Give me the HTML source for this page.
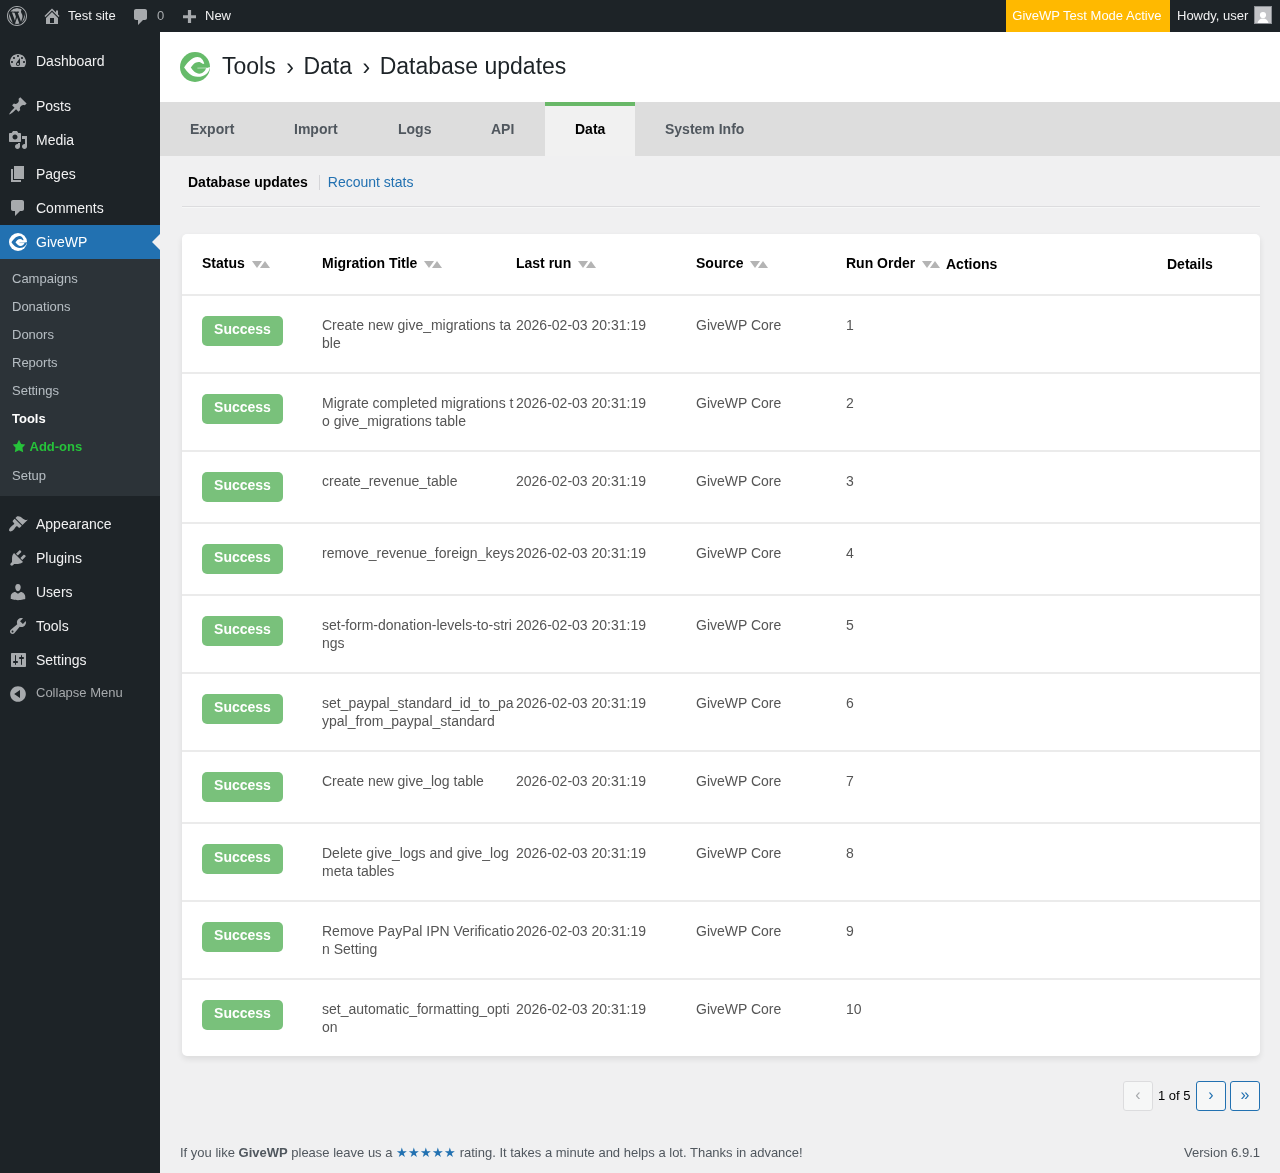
<!DOCTYPE html>
<html><head><meta charset="utf-8">
<style>
*{box-sizing:border-box;margin:0;padding:0}
html,body{width:1280px;height:1173px;overflow:hidden}
body{background:#f0f0f1;font-family:"Liberation Sans",sans-serif;font-size:13px;color:#3c434a;position:relative}
.abs{position:absolute}
/* admin bar */
#wpadminbar{position:absolute;left:0;top:0;width:1280px;height:32px;background:#1d2327;color:#f0f0f1;font-size:13px;line-height:32px}
#wpadminbar .t{position:absolute;top:0;white-space:nowrap}
#wpadminbar svg{position:absolute}
/* sidebar */
#adminmenuback{position:absolute;left:0;top:32px;width:160px;height:1141px;background:#1d2327}
#menu .it{position:absolute;left:0;width:160px;height:34px}
#menu .it .n{position:absolute;left:36px;top:8px;line-height:18px;font-size:14px;color:#f0f0f1;white-space:nowrap}
#menu .it svg{position:absolute;left:8px;top:7px;width:20px;height:20px;fill:#a7aaad}
#sub{position:absolute;left:0;top:259px;width:160px;height:237px;background:#2c3338}
#sub .s{position:absolute;left:12px;font-size:13px;line-height:18px;color:rgba(240,246,252,.7);white-space:nowrap}
/* main */
#hdr{position:absolute;left:160px;top:32px;width:1120px;height:70px;background:#fff}
#tabs{position:absolute;left:160px;top:102px;width:1120px;height:54px;background:#dddddd}
#tabs .tab{position:absolute;top:0;height:54px;line-height:54px;font-weight:bold;font-size:14px;color:#50575e;padding:0 30px;white-space:nowrap}
#tabs .tab.on{background:#f1f1f1;color:#000;border-top:4px solid #69b868;line-height:46px}
#subnav{position:absolute;left:188px;top:172px;font-size:14px;line-height:20px;white-space:nowrap}
#card{position:absolute;left:182px;top:234px;width:1078px;height:822px;background:#fff;border-radius:5px;box-shadow:0 3px 6px rgba(0,0,0,.09)}
.th{position:absolute;top:0;height:60px;font-weight:bold;font-size:14px;color:#000;white-space:nowrap}
.th .l{position:absolute;top:20px;line-height:18px}
.sort{position:absolute;top:27px;width:18px;height:7px}
.row{position:absolute;left:0;width:1078px;border-top:2px solid #ebebeb}
.cell{position:absolute;top:20px;font-size:14px;line-height:18px;color:#555}
.badge{position:absolute;left:20px;top:20px;width:81px;height:30px;border-radius:5px;background:#79c17b;color:#fff;font-weight:bold;font-size:14px;line-height:18px;padding-top:4px;text-align:center}
.ttl{left:140px;width:194px;word-break:break-all}
#pager .b{position:absolute;top:1081px;width:30px;height:30px;border:1px solid #2271b1;border-radius:3px;background:#f6f7f7;color:#2271b1;text-align:center;line-height:26px;font-size:16px}
#footer{position:absolute;left:180px;top:1144px;width:1080px;font-size:13px;line-height:18px;color:#50575e}
</style></head><body><div id="wrap" style="position:absolute;left:0;top:0;width:1280px;height:1173px;will-change:transform">

<div id="wpadminbar">
  <!-- wp logo -->
  <svg style="left:7px;top:6px" width="20" height="20" viewBox="0 0 20 20" fill="#a7aaad"><path d="M20 10c0-5.52-4.48-10-10-10S0 4.48 0 10s4.48 10 10 10 10-4.48 10-10zM10 1.01c4.97 0 8.99 4.02 8.99 8.99s-4.02 8.99-8.99 8.99S1.01 14.97 1.01 10 5.03 1.01 10 1.01zM8.01 14.82L4.96 6.610c.49-.03 1.05-.08 1.05-.08.43-.05.38-1.01-.06-.99 0 0-1.290.1-2.13.1-.15 0-.33 0-.52-.01 1.44-2.17 3.9-3.6 6.7-3.6 2.09 0 3.990.79 5.410 2.09-.6-.08-1.45.35-1.45 1.59 0 .77.47 1.42.94 2.19.37.63.6 1.42.6 2.58 0 1.57-1.48 5.27-1.48 5.27l-3.2-8.8c.57-.02.86-.18.86-.18.5-.05.44-1.25-.06-1.22 0 0-1.53.12-2.52.12-.91 0-2.45-.12-2.45-.12-.5-.03-.56 1.2-.06 1.22l.97.08 1.33 3.6zM17.4 10c.24-.64.74-1.87.43-4.25.7 1.29 1.05 2.71 1.05 4.250 0 3.29-1.73 6.24-4.4 7.78.97-2.59 1.94-5.2 2.92-7.78zM6.1 18.09C3.12 16.65 1.11 13.530 1.11 10c0-1.3.23-2.48.72-3.59C3.25 10.3 4.67 14.2 6.1 18.09zm4.03-6.63l2.58 6.98c-.86.29-1.76.45-2.71.45-.79 0-1.57-.11-2.29-.33.81-2.38 1.62-4.74 2.42-7.1z"/><circle cx="10" cy="10" r="8.5" fill="none" stroke="#1d2327" stroke-width="1"/></svg>
  <svg style="left:42px;top:6px" width="20" height="20" viewBox="0 0 20 20" fill="#a7aaad"><path d="M16 8.5l1.53 1.53-1.06 1.06L10 4.62l-6.47 6.47-1.06-1.06L10 2.5l4 4v-2h2v4zm-6-2.46l6 5.99V18H4v-5.97zM12 17v-5H8v5h4z"/></svg>
  <span class="t" style="left:68px">Test site</span>
  <svg style="left:131px;top:7px" width="20" height="20" viewBox="0 0 20 20" fill="#a7aaad"><path d="M5 2h9c1.1 0 2 .9 2 2v7c0 1.1-.9 2-2 2h-2l-5 5v-5H5c-1.1 0-2-.9-2-2V4c0-1.1.9-2 2-2z"/></svg>
  <span class="t" style="left:157px;color:#a7aaad">0</span>
  <svg style="left:183px;top:10px" width="13" height="13" viewBox="0 0 13 13" fill="#a7aaad"><path d="M0 5.2h13v3.1H0zM4.9 0h3.2v13H4.9z"/></svg>
  <span class="t" style="left:205px">New</span>
  <div class="abs" style="left:1006px;top:0;width:164px;height:32px;background:#ffb900"></div>
  <span class="t" style="left:1012.3px;color:#fff">GiveWP Test Mode Active</span>
  <span class="t" style="left:1177px">Howdy, user</span>
  <div class="abs" style="left:1254px;top:6px;width:18px;height:18px;border:1px solid #8c8f94;background:#c3c4c7;overflow:hidden">
    <svg width="16" height="16" viewBox="0 0 16 16" style="position:absolute;left:0;top:0"><circle cx="8" cy="8" r="3.1" fill="#fff"/><path d="M2.5 16c.5-2.6 2.6-4.6 5.5-4.6s5 2 5.5 4.6z" fill="#fff"/></svg>
  </div>
</div>

<div id="adminmenuback"></div>
<div id="menu">
  <div class="it" style="top:44px"><svg viewBox="0 0 20 20"><path fill-rule="evenodd" d="M3.76 16h12.48c1.1-1.37 1.76-3.11 1.76-5 0-4.42-3.58-8-8-8s-8 3.58-8 8c0 1.890.66 3.630 1.76 5zM10 4c.55 0 1 .45 1 1s-.45 1-1 1-1-.45-1-1 .45-1 1-1zM6 6c.55 0 1 .45 1 1s-.45 1-1 1-1-.45-1-1 .45-1 1-1zm8 0c.55 0 1 .45 1 1s-.45 1-1 1-1-.45-1-1 .45-1 1-1zm-5.37 5.55L12 7v6c0 1.1-.9 2-2 2s-2-.9-2-2c0-.57.24-1.08.63-1.45zM4 10c.55 0 1 .45 1 1s-.45 1-1 1-1-.45-1-1 .45-1 1-1zm12 0c.55 0 1 .45 1 1s-.45 1-1 1-1-.45-1-1 .45-1 1-1zm-5 3c0-.55-.45-1-1-1s-1 .45-1 1 .45 1 1 1 1-.45 1-1z"/></svg><span class="n">Dashboard</span></div>
  <div class="it" style="top:89px"><svg viewBox="0 0 20 20"><path d="M10.44 3.02l1.82-1.82 6.36 6.35-1.83 1.82c-1.05-.68-2.48-.57-3.41.36l-.75.75c-.92.93-1.04 2.35-.35 3.41l-1.83 1.82-2.41-2.41-2.8 2.79c-.42.42-3.38 2.71-3.8 2.29s1.86-3.39 2.28-3.81l2.79-2.79L4.1 9.36l1.83-1.82c1.05.69 2.48.57 3.4-.36l.75-.75c.93-.92 1.05-2.35.36-3.41z"/></svg><span class="n">Posts</span></div>
  <div class="it" style="top:123px"><svg viewBox="0 0 20 20"><path fill-rule="evenodd" d="M13 11V4c0-.55-.45-1-1-1h-1.67L9 1H5L3.67 3H2c-.55 0-1 .45-1 1v7c0 .55.45 1 1 1h10c.55 0 1-.45 1-1zM7 4.5c1.38 0 2.5 1.12 2.5 2.5S8.38 9.5 7 9.5 4.5 8.38 4.5 7 5.62 4.5 7 4.5zM14 6h5v10.5c0 1.38-1.12 2.5-2.5 2.5S14 17.88 14 16.5s1.12-2.5 2.5-2.5c.17 0 .34.02.5.05V9h-3V6zm-4 8.05V13h2v3.5c0 1.38-1.12 2.5-2.5 2.5S7 17.88 7 16.5 8.12 14 9.5 14c.17 0 .34.02.5.05z"/></svg><span class="n">Media</span></div>
  <div class="it" style="top:157px"><svg viewBox="0 0 20 20"><path d="M6 15V2h10v13H6zm-1 1h8v2H3V5h2v11z"/></svg><span class="n">Pages</span></div>
  <div class="it" style="top:191px"><svg viewBox="0 0 20 20"><path d="M5 2h9c1.1 0 2 .9 2 2v7c0 1.1-.9 2-2 2h-2l-5 5v-5H5c-1.1 0-2-.9-2-2V4c0-1.1.9-2 2-2z"/></svg><span class="n">Comments</span></div>
  <div class="it" style="top:225px;background:#2271b1"><svg viewBox="0 0 30 30" style="left:9px;top:8px;width:18px;height:18px"><circle cx="15" cy="15" r="15" fill="#fff"/><path fill="#2271b1" d="M4.1,15.5 C7,11.5 11.5,5.1 17.6,5.1 C21,5.1 23.2,8 24.3,11.6 C23.5,12 22.8,12.1 22.3,11.6 C21.2,10.6 20,9.9 18.6,9.9 C15,9.9 12.5,13 10.8,15.5 C12.8,18.3 15.8,21.7 19.3,21.7 C22.5,21.7 25,19.4 26.1,16.3 L29.9,14.9 C29.6,19.5 25.5,24.8 17.6,24.8 C11,24.8 7,19.5 4.1,15.5 Z"/><path d="M17.4,16.1 L27,16" stroke="#2271b1" stroke-width=".8" opacity=".8"/></svg><span class="n" style="color:#fff">GiveWP</span>
    <div class="abs" style="right:0;top:9px;width:0;height:0;border:8px solid transparent;border-right-color:#f0f0f1"></div></div>
  <div id="sub">
    <span class="s" style="top:11px">Campaigns</span>
    <span class="s" style="top:39px">Donations</span>
    <span class="s" style="top:67px">Donors</span>
    <span class="s" style="top:95px">Reports</span>
    <span class="s" style="top:123px">Settings</span>
    <span class="s" style="top:151px;color:#fff;font-weight:bold">Tools</span>
    <svg width="14" height="14" viewBox="0 0 20 20" style="position:absolute;left:11.5px;top:180px" fill="#26c23a"><path d="M10 1l3 6 6 .75-4.12 4.62L16 19l-6-3-6 3 1.13-6.63L1 7.75 7 7z"/></svg>
    <span class="s" style="top:179px;left:29.5px;color:#26c23a;font-weight:bold">Add-ons</span>
    <span class="s" style="top:208px">Setup</span>
  </div>
  <div class="it" style="top:507px"><svg viewBox="0 0 20 20"><path d="M14.48 11.06L7.41 3.99l1.5-1.5c.5-.56 2.3-.47 3.51.32 1.21.8 1.43 1.28 2.910 2.1 1.18.64 2.45 1.26 4.45.85zm-.71.71L6.7 4.7 4.93 6.47c-.39.39-.39 1.02 0 1.41l1.06 1.06c.39.39.39 1.03 0 1.42-.6.6-1.43 1.11-2.21 1.69-.35.26-.7.53-1.01.84C1.43 14.23.4 16.08 1.4 17.07c.99 1 2.84-.03 4.18-1.36.31-.31.58-.66.85-1.02.57-.78 1.08-1.61 1.69-2.21.39-.39 1.02-.39 1.41 0l1.06 1.06c.39.39 1.02.39 1.41 0z"/></svg><span class="n">Appearance</span></div>
  <div class="it" style="top:541px"><svg viewBox="0 0 20 20"><path d="M13.11 4.36L9.87 7.6 8 5.73l3.24-3.24c.35-.34 1.05-.2 1.56.32.52.51.66 1.21.31 1.55zm-8 1.77l.91-1.12 9.01 9.01-1.19.84c-.71.71-2.630 1.16-3.82 1.16H6.14L4.9 17.26c-.59.59-1.54.59-2.12 0-.59-.58-.59-1.53 0-2.12l1.24-1.24v-3.88c0-1.13.4-3.19 1.09-3.89zm7.26 3.97l3.24-3.24c.34-.35 1.04-.21 1.55.31.52.51.66 1.21.31 1.55l-3.24 3.25z"/></svg><span class="n">Plugins</span></div>
  <div class="it" style="top:575px"><svg viewBox="0 0 20 20"><path d="M10 9.25c-2.27 0-2.73-3.44-2.73-3.44C7 4.02 7.82 2 9.97 2c2.16 0 2.98 2.02 2.71 3.81 0 0-.41 3.44-2.68 3.44zm0 2.57L12.72 10c2.39 0 4.52 2.33 4.52 4.53v2.49s-3.65 1.13-7.24 1.13c-3.650 0-7.24-1.13-7.24-1.13v-2.49c0-2.25 1.94-4.48 4.47-4.48z"/></svg><span class="n">Users</span></div>
  <div class="it" style="top:609px"><svg viewBox="0 0 20 20"><path fill-rule="evenodd" d="M16.68 9.77c-1.34 1.34-3.3 1.67-4.95.99l-5.41 6.52c-.99.99-2.59.99-3.58 0s-.99-2.59 0-3.57l6.52-5.42c-.68-1.65-.35-3.61.99-4.95 1.28-1.28 3.12-1.62 4.72-1.06l-2.89 2.89 2.82 2.82 2.86-2.87c.53 1.58.18 3.39-1.08 4.65zM3.81 16.21c.4.39 1.04.39 1.43 0 .4-.4.4-1.04 0-1.43-.39-.4-1.03-.4-1.43 0-.39.39-.39 1.03 0 1.43z"/></svg><span class="n">Tools</span></div>
  <div class="it" style="top:643px"><svg viewBox="0 0 20 20"><path fill-rule="evenodd" d="M18 16V4c0-.55-.45-1-1-1H4c-.55 0-1 .45-1 1v12c0 .55.45 1 1 1h13c.55 0 1-.45 1-1zM8 11h1c.55 0 1 .45 1 1s-.45 1-1 1H8v1.5c0 .28-.22.5-.5.5s-.5-.22-.5-.5V13H6c-.55 0-1-.45-1-1s.45-1 1-1h1V5.5c0-.28.22-.5.5-.5s.5.22.5.5V11zm5-2h-1c-.55 0-1-.45-1-1s.45-1 1-1h1V5.5c0-.28.22-.5.5-.5s.5.22.5.5V7h1c.55 0 1 .45 1 1s-.45 1-1 1h-1v5.5c0 .28-.22.5-.5.5s-.5-.22-.5-.5V9z"/></svg><span class="n">Settings</span></div>
  <div class="it" style="top:677px"><svg viewBox="0 0 20 20"><path d="M10 2.16c4.33 0 7.84 3.51 7.84 7.84s-3.51 7.84-7.84 7.84S2.16 14.33 2.16 10 5.71 2.16 10 2.16zm2 11.72V6.12L6.18 9.97z"/></svg><span class="n" style="font-size:13px;color:#a7aaad;top:7px">Collapse Menu</span></div>
</div>

<div id="hdr">
  <svg class="abs" style="left:20px;top:20px" width="30" height="30" viewBox="0 0 30 30"><circle cx="15" cy="15" r="15" fill="#66bb6a"/><path fill="#fff" d="M4.1,15.5 C7,11.5 11.5,5.1 17.6,5.1 C21,5.1 23.2,8 24.3,11.6 C23.5,12 22.8,12.1 22.3,11.6 C21.2,10.6 20,9.9 18.6,9.9 C15,9.9 12.5,13 10.8,15.5 C12.8,18.3 15.8,21.7 19.3,21.7 C22.5,21.7 25,19.4 26.1,16.3 L29.9,14.9 C29.6,19.5 25.5,24.8 17.6,24.8 C11,24.8 7,19.5 4.1,15.5 Z"/><path d="M17.4,16.1 L27,16" stroke="#fff" stroke-width=".7" opacity=".75"/></svg>
  <div class="abs" style="left:62px;top:20px;font-size:23px;line-height:28px;color:#1d2327;white-space:nowrap">Tools<span style="margin:0 9.5px 0 10.5px;position:relative;top:1px">›</span>Data<span style="margin:0 9.5px 0 10.5px;position:relative;top:1px">›</span>Database updates</div>
</div>

<div id="tabs">
  <div class="tab" style="left:0">Export</div>
  <div class="tab" style="left:104px">Import</div>
  <div class="tab" style="left:208px">Logs</div>
  <div class="tab" style="left:301px">API</div>
  <div class="tab on" style="left:385px">Data</div>
  <div class="tab" style="left:475px">System Info</div>
</div>

<div id="subnav"><b style="color:#000">Database updates</b><span style="display:inline-block;width:1px;height:15px;background:#d5d5d8;margin:0 7.5px 0 11.5px;vertical-align:-3px"></span><span style="color:#2271b1">Recount stats</span></div>
<div class="abs" style="left:182px;top:206px;width:1078px;height:2px;border-top:1px solid #dcdcde;border-bottom:1px solid #f6f7f7"></div>

<div id="card">
  <div class="th" style="left:20px"><span class="l">Status</span><svg class="sort" style="left:50px" viewBox="0 0 18 7"><path d="M0 0h10L5 7z" fill="#b4b4b4"/><path d="M8 7h10L13 0z" fill="#b4b4b4"/></svg></div>
  <div class="th" style="left:140px"><span class="l">Migration Title</span><svg class="sort" style="left:102px" viewBox="0 0 18 7"><path d="M0 0h10L5 7z" fill="#b4b4b4"/><path d="M8 7h10L13 0z" fill="#b4b4b4"/></svg></div>
  <div class="th" style="left:334px"><span class="l">Last run</span><svg class="sort" style="left:62px" viewBox="0 0 18 7"><path d="M0 0h10L5 7z" fill="#b4b4b4"/><path d="M8 7h10L13 0z" fill="#b4b4b4"/></svg></div>
  <div class="th" style="left:514px"><span class="l">Source</span><svg class="sort" style="left:54px" viewBox="0 0 18 7"><path d="M0 0h10L5 7z" fill="#b4b4b4"/><path d="M8 7h10L13 0z" fill="#b4b4b4"/></svg></div>
  <div class="th" style="left:664px"><span class="l">Run Order</span><svg class="sort" style="left:76px" viewBox="0 0 18 7"><path d="M0 0h10L5 7z" fill="#b4b4b4"/><path d="M8 7h10L13 0z" fill="#b4b4b4"/></svg></div>
  <div class="th" style="left:764px"><span class="l" style="top:21px">Actions</span></div>
  <div class="th" style="left:985px"><span class="l" style="top:21px">Details</span></div>
  <div id="rows">
<div class="row" style="top:60px;height:78px"><div class="badge">Success</div><div class="cell ttl">Create new give_migrations table</div><div class="cell" style="left:334px">2026-02-03 20:31:19</div><div class="cell" style="left:514px">GiveWP Core</div><div class="cell" style="left:664px">1</div></div>
<div class="row" style="top:138px;height:78px"><div class="badge">Success</div><div class="cell ttl">Migrate completed migrations to give_migrations table</div><div class="cell" style="left:334px">2026-02-03 20:31:19</div><div class="cell" style="left:514px">GiveWP Core</div><div class="cell" style="left:664px">2</div></div>
<div class="row" style="top:216px;height:72px"><div class="badge">Success</div><div class="cell ttl">create_revenue_table</div><div class="cell" style="left:334px">2026-02-03 20:31:19</div><div class="cell" style="left:514px">GiveWP Core</div><div class="cell" style="left:664px">3</div></div>
<div class="row" style="top:288px;height:72px"><div class="badge">Success</div><div class="cell ttl">remove_revenue_foreign_keys</div><div class="cell" style="left:334px">2026-02-03 20:31:19</div><div class="cell" style="left:514px">GiveWP Core</div><div class="cell" style="left:664px">4</div></div>
<div class="row" style="top:360px;height:78px"><div class="badge">Success</div><div class="cell ttl">set-form-donation-levels-to-strings</div><div class="cell" style="left:334px">2026-02-03 20:31:19</div><div class="cell" style="left:514px">GiveWP Core</div><div class="cell" style="left:664px">5</div></div>
<div class="row" style="top:438px;height:78px"><div class="badge">Success</div><div class="cell ttl">set_paypal_standard_id_to_paypal_from_paypal_standard</div><div class="cell" style="left:334px">2026-02-03 20:31:19</div><div class="cell" style="left:514px">GiveWP Core</div><div class="cell" style="left:664px">6</div></div>
<div class="row" style="top:516px;height:72px"><div class="badge">Success</div><div class="cell ttl">Create new give_log table</div><div class="cell" style="left:334px">2026-02-03 20:31:19</div><div class="cell" style="left:514px">GiveWP Core</div><div class="cell" style="left:664px">7</div></div>
<div class="row" style="top:588px;height:78px"><div class="badge">Success</div><div class="cell ttl">Delete give_logs and give_log meta tables</div><div class="cell" style="left:334px">2026-02-03 20:31:19</div><div class="cell" style="left:514px">GiveWP Core</div><div class="cell" style="left:664px">8</div></div>
<div class="row" style="top:666px;height:78px"><div class="badge">Success</div><div class="cell ttl">Remove PayPal IPN Verification Setting</div><div class="cell" style="left:334px">2026-02-03 20:31:19</div><div class="cell" style="left:514px">GiveWP Core</div><div class="cell" style="left:664px">9</div></div>
<div class="row" style="top:744px;height:78px"><div class="badge">Success</div><div class="cell ttl">set_automatic_formatting_option</div><div class="cell" style="left:334px">2026-02-03 20:31:19</div><div class="cell" style="left:514px">GiveWP Core</div><div class="cell" style="left:664px">10</div></div>
</div>
</div>

<div id="pager">
  <div class="b" style="left:1123px;border-color:#dcdcde;color:#a7aaad">‹</div>
  <div class="abs" style="left:1158px;top:1087px;font-size:13px;line-height:18px;color:#000">1 of 5</div>
  <div class="b" style="left:1196px">›</div>
  <div class="b" style="left:1230px">»</div>
</div>

<div id="footer">If you like <b>GiveWP</b> please leave us a <span style="color:#2271b1">★★★★★</span> rating. It takes a minute and helps a lot. Thanks in advance!<span style="position:absolute;right:0;top:0">Version 6.9.1</span></div>

</div></body></html>
